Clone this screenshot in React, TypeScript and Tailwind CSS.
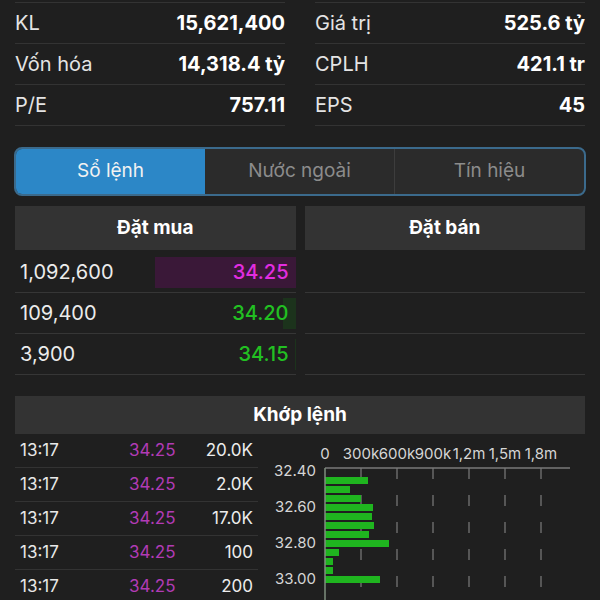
import React from "react";

const stats = [
  [
    ["KL", "15,621,400"],
    ["Vốn hóa", "14,318.4 tỷ"],
    ["P/E", "757.11"],
  ],
  [
    ["Giá trị", "525.6 tỷ"],
    ["CPLH", "421.1 tr"],
    ["EPS", "45"],
  ],
];

const orders = [
  { vol: "1,092,600", price: "34.25", color: "text-[#e22de0]", bar: 141, barColor: "bg-[#3a1838]" },
  { vol: "109,400", price: "34.20", color: "text-[#22c022]", bar: 13, barColor: "bg-[#1c331c]" },
  { vol: "3,900", price: "34.15", color: "text-[#22c022]", bar: 1, barColor: "bg-[#1c331c]" },
];

const trades = [
  ["13:17", "34.25", "20.0K"],
  ["13:17", "34.25", "2.0K"],
  ["13:17", "34.25", "17.0K"],
  ["13:17", "34.25", "100"],
  ["13:17", "34.25", "200"],
];

const barWidths = [0, 43, 25, 36, 48, 47, 49, 44, 64, 14, 8, 8, 55, 0, 0];

function Chart() {
  const ox = 67;
  const ticks = ["0", "300k", "600k", "900k", "1,2m", "1,5m", "1,8m"];
  const ylabels = ["32.40", "32.60", "32.80", "33.00"];
  return (
    <svg width="342" height="167" className="block shrink-0">
      {ticks.map((t, i) => (
        <text
          key={t}
          x={ox + 36 * i}
          y={25}
          textAnchor="middle"
          fontSize="15"
          fill="#d6d6d6"
          fontFamily="Inter, sans-serif"
        >
          {t}
        </text>
      ))}
      {[1, 2, 3, 4, 5, 6].map((i) => (
        <line
          key={i}
          x1={ox + 36 * i}
          x2={ox + 36 * i}
          y1={34}
          y2={167}
          stroke="#6a6a6a"
          strokeWidth="1.5"
          strokeDasharray="11 16"
        />
      ))}
      <line x1={ox} x2={312} y1={34} y2={34} stroke="#7a7a7a" strokeWidth="1.5" />
      {barWidths.map((w, i) =>
        w > 0 ? (
          <rect key={i} x={ox} y={34 + 9 * i} width={w} height={7} fill="#1fb51f" />
        ) : null
      )}
      <line x1={ox} x2={ox} y1={34} y2={167} stroke="#7f8f7f" strokeWidth="1.5" />
      {ylabels.map((l, i) => (
        <text
          key={l}
          x={58}
          y={42 + 36 * i}
          textAnchor="end"
          fontSize="15"
          fill="#d6d6d6"
          fontFamily="Inter, sans-serif"
        >
          {l}
        </text>
      ))}
    </svg>
  );
}

export default function App() {
  return (
    <div
      className="w-[600px] h-[600px] overflow-hidden bg-[#1f1f1f] text-white"
      style={{ fontFamily: "Inter, 'Noto Sans', sans-serif" }}
    >
      {/* Stats */}
      <div className="flex gap-[30px] px-[15px] pt-[2px]">
        {stats.map((col, ci) => (
          <div key={ci} className="flex-1 border-t border-[#333333]">
            {col.map(([label, value]) => (
              <div
                key={label}
                className="flex h-[41px] items-center justify-between border-b border-[#333333]"
              >
                <span className="text-[20px] text-[#e4e4e4]">{label}</span>
                <span className="text-[20px] font-bold text-white">{value}</span>
              </div>
            ))}
          </div>
        ))}
      </div>

      {/* Tabs */}
      <div className="mx-[14px] mt-[21px] flex h-[49px] overflow-hidden rounded-[8px] border-2 border-[#3b6a8c] bg-[#2b2b2b]">
        <div className="flex flex-1 items-center justify-center bg-[#2c87c7] text-[19px] text-[#f2f2f2]">
          Sổ lệnh
        </div>
        <div className="flex flex-1 items-center justify-center border-r border-[#3d3d3d] text-[19px] text-[#8c8c8c]">
          Nước ngoài
        </div>
        <div className="flex flex-1 items-center justify-center text-[19px] text-[#8c8c8c]">
          Tín hiệu
        </div>
      </div>

      {/* Order book */}
      <div className="mt-[10px] flex gap-[9px] px-[15px]">
        <div className="flex-1">
          <div className="mb-[2px] flex h-[44px] items-center justify-center bg-[#333333] text-[19px] font-bold">
            Đặt mua
          </div>
          {orders.map((o) => (
            <div
              key={o.vol}
              className="flex h-[41px] items-center justify-between border-b border-[#363636] pl-[5px]"
            >
              <span className="text-[20px] text-[#ececec]">{o.vol}</span>
              <div className="relative flex h-[31px] w-[141px] items-center justify-end pr-[7px]">
                <div
                  className={`absolute right-0 top-0 h-full ${o.barColor}`}
                  style={{ width: o.bar }}
                />
                <span className={`relative text-[20px] font-medium ${o.color}`}>{o.price}</span>
              </div>
            </div>
          ))}
        </div>
        <div className="flex-1">
          <div className="mb-[2px] flex h-[44px] items-center justify-center bg-[#333333] text-[19px] font-bold">
            Đặt bán
          </div>
          {orders.map((o) => (
            <div key={o.vol} className="h-[41px] border-b border-[#363636]" />
          ))}
        </div>
      </div>

      {/* Khớp lệnh */}
      <div className="mx-[15px] mt-[21px] flex h-[38px] items-center justify-center bg-[#333333] text-[19px] font-bold">
        Khớp lệnh
      </div>
      <div className="flex pl-[15px]">
        <div className="w-[243px] shrink-0">
          {trades.map(([t, p, v], i) => (
            <div
              key={i}
              className="flex h-[34px] items-center border-b border-[#333333] px-[5px] text-[17px]"
            >
              <span className="w-[109px] text-[#e8e8e8]">{t}</span>
              <span className="w-[60px] text-[#b13bb5]">{p}</span>
              <span className="flex-1 text-right text-[#ececec]">{v}</span>
            </div>
          ))}
        </div>
        <Chart />
      </div>
    </div>
  );
}
